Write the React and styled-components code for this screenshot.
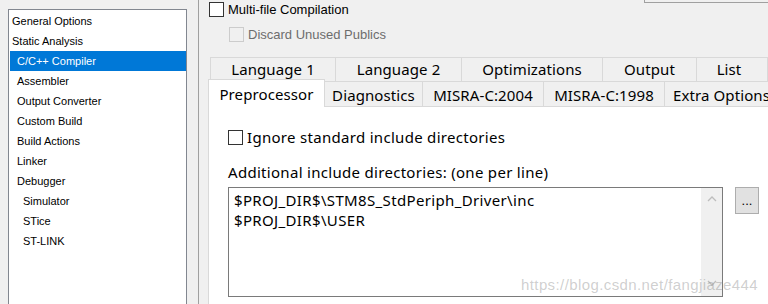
import React from "react";
import styled, { createGlobalStyle } from "styled-components";

const Global = createGlobalStyle`
  html, body { margin: 0; padding: 0; background: #f0f0f0; }
  body { width: 768px; height: 304px; overflow: hidden; }
`;

const Page = styled.div`
  position: relative;
  display: flex;
  width: 768px;
  height: 304px;
  overflow: hidden;
  background: #f0f0f0;
  color: #000;
  font-family: "Noto Sans", "Liberation Sans", sans-serif;
`;

const Sidebar = styled.div`
  flex: 0 0 199px;
  box-sizing: border-box;
  padding: 9px 0 0 8px;
  border-right: 1px solid #a0a0a0;
`;

const TreePanel = styled.div`
  box-sizing: border-box;
  width: 179px;
  height: 310px;
  padding-top: 1px;
  background: #fff;
  border: 1px solid #828790;
`;

const TreeItem = styled.div`
  height: 20px;
  line-height: 20px;
  margin-left: 1px;
  padding-left: ${(p) => [2, 7, 13][p.$level]}px;
  font-family: "Liberation Sans", Arial, sans-serif;
  font-size: 11px;
  white-space: nowrap;
  background: ${(p) => (p.$selected ? "#0078d7" : "transparent")};
  color: ${(p) => (p.$selected ? "#fff" : "#000")};
`;

const Main = styled.div`
  flex: 1;
  min-width: 0;
  display: flex;
  flex-direction: column;
  padding-left: 9px;
`;

const TopRow = styled.div`
  display: flex;
  align-items: flex-start;
  padding: 2px 0 0 1px;
`;

const Option = styled.label`
  display: flex;
  align-items: center;
  gap: 4px;
  white-space: nowrap;
  font-family: ${(p) => (p.$large ? '"Noto Sans", sans-serif' : '"Liberation Sans", Arial, sans-serif')};
  font-size: ${(p) => (p.$large ? 15 : 13)}px;
  letter-spacing: ${(p) => (p.$large ? "0.3px" : "normal")};
  line-height: ${(p) => (p.$large ? 21 : 15)}px;
  color: ${(p) => (p.$disabled ? "#6d6d6d" : "#000")};
  margin-left: ${(p) => p.$indent || 0}px;
  margin-top: ${(p) => p.$top || 0}px;
`;

const Box = styled.span`
  flex: 0 0 auto;
  box-sizing: border-box;
  width: 15px;
  height: 15px;
  border: 1px solid ${(p) => (p.$disabled ? "#cccccc" : "#333333")};
  background: ${(p) => (p.$disabled ? "transparent" : "#fff")};
`;

const CutBox = styled.div`
  margin-left: auto;
  margin-top: -2px;
  width: 124px;
  height: 3px;
  box-sizing: border-box;
  border-left: 1px solid #a0a0a0;
  border-bottom: 1px solid #a0a0a0;
`;

const TabRow = styled.div`
  display: flex;
  margin-left: ${(p) => p.$offset || 0}px;
  margin-top: ${(p) => p.$top || 0}px;
  height: ${(p) => p.$height}px;
  align-items: flex-start;
`;

const UpperTab = styled.div`
  box-sizing: border-box;
  flex: ${(p) => (p.$width ? `0 0 ${p.$width}px` : "1 0 auto")};
  height: 24px;
  padding-bottom: 1px;
  padding-right: ${(p) => p.$padRight || 0}px;
  display: flex;
  align-items: center;
  justify-content: center;
  border: 1px solid #d9d9d9;
  border-bottom: none;
  & + & { margin-left: -1px; }
  font-size: 15px;
  letter-spacing: 0.1px;
  white-space: nowrap;
`;

const LowerTab = styled.div`
  position: relative;
  box-sizing: border-box;
  flex: 0 0 ${(p) => p.$width}px;
  height: ${(p) => (p.$active ? 28 : 26)}px;
  margin-top: ${(p) => (p.$active ? -2 : 0)}px;
  padding-top: ${(p) => (p.$active ? 0 : 1)}px;
  display: flex;
  align-items: center;
  justify-content: center;
  border: 1px solid #d9d9d9;
  border-bottom: ${(p) => (p.$active ? "none" : "1px solid #d9d9d9")};
  background: ${(p) => (p.$active ? "#fff" : "#f0f0f0")};
  z-index: ${(p) => (p.$active ? 1 : 0)};
  & + & { margin-left: -1px; }
  font-size: 15px;
  letter-spacing: 0.1px;
  white-space: nowrap;
`;

const Panel = styled.div`
  flex: 1;
  box-sizing: border-box;
  display: flex;
  flex-direction: column;
  align-items: flex-start;
  padding: 20px 0 0 19px;
  background: #fff;
  border-left: 1px solid #d9d9d9;
`;

const FieldLabel = styled.div`
  margin-top: 14px;
  font-size: 15px;
  letter-spacing: 0.3px;
  line-height: 20px;
  white-space: nowrap;
`;

const EditorRow = styled.div`
  display: flex;
  align-items: flex-start;
  margin-top: 5px;
`;

const TextArea = styled.div`
  box-sizing: border-box;
  width: 495px;
  height: 110px;
  display: flex;
  background: #fff;
  border: 1px solid #7a7a7a;
`;

const Lines = styled.div`
  flex: 1;
  padding: 2px 5px;
  font-size: 15px;
  letter-spacing: 0.35px;
  line-height: 20px;
  white-space: pre;
`;

const ScrollBar = styled.div`
  flex: 0 0 21px;
  display: flex;
  flex-direction: column;
  justify-content: space-between;
  padding-bottom: 3px;
  background: #f0f0f0;
`;

const Arrow = styled.div`
  height: 21px;
  display: flex;
  align-items: center;
  justify-content: center;
`;

const BrowseButton = styled.div`
  box-sizing: border-box;
  margin-left: 12px;
  width: 24px;
  height: 27px;
  display: flex;
  align-items: center;
  justify-content: center;
  background: #e1e1e1;
  border: 1px solid #adadad;
  font-family: "Liberation Sans", Arial, sans-serif;
  font-size: 13px;
  line-height: 15px;
`;

const Watermark = styled.div`
  position: absolute;
  left: 521px;
  top: 276px;
  font-family: "Liberation Sans", Arial, sans-serif;
  font-size: 15px;
  line-height: 17px;
  letter-spacing: 0.4px;
  color: rgba(140, 140, 140, 0.42);
  pointer-events: none;
  white-space: nowrap;
`;

const Chevron = ({ down }) => (
  <svg width="10" height="6" viewBox="0 0 10 6">
    <polyline
      points={down ? "1,1 5,5 9,1" : "1,5 5,1 9,5"}
      fill="none"
      stroke="#bdbdbd"
      strokeWidth="1.3"
    />
  </svg>
);

const tree = [
  ["General Options", 0],
  ["Static Analysis", 0],
  ["C/C++ Compiler", 1, true],
  ["Assembler", 1],
  ["Output Converter", 1],
  ["Custom Build", 1],
  ["Build Actions", 1],
  ["Linker", 1],
  ["Debugger", 1],
  ["Simulator", 2],
  ["STice", 2],
  ["ST-LINK", 2],
];

const upperTabs = [
  ["Language 1", 126],
  ["Language 2", 127],
  ["Optimizations", 142],
  ["Output", 95],
  ["List", 0, 6],
];

const lowerTabs = [
  ["Preprocessor", 117, true],
  ["Diagnostics", 99],
  ["MISRA-C:2004", 122],
  ["MISRA-C:1998", 122],
  ["Extra Options", 115],
];

export default function App() {
  return (
    <>
      <Global />
      <Page>
        <Sidebar>
          <TreePanel>
            {tree.map(([name, level, sel]) => (
              <TreeItem key={name} $level={level} $selected={sel}>
                {name}
              </TreeItem>
            ))}
          </TreePanel>
        </Sidebar>
        <Main>
          <TopRow>
            <Option>
              <Box />
              Multi-file Compilation
            </Option>
            <CutBox />
          </TopRow>
          <Option $disabled $indent={21} $top={10}>
            <Box $disabled />
            Discard Unused Publics
          </Option>
          <TabRow $offset={2} $top={15} $height={24}>
            {upperTabs.map(([name, w, pr]) => (
              <UpperTab key={name} $width={w} $padRight={pr}>
                {name}
              </UpperTab>
            ))}
          </TabRow>
          <TabRow $height={26}>
            {lowerTabs.map(([name, w, active]) => (
              <LowerTab key={name} $width={w} $active={active}>
                {name}
              </LowerTab>
            ))}
          </TabRow>
          <Panel>
            <Option $large>
              <Box />
              Ignore standard include directories
            </Option>
            <FieldLabel>Additional include directories: (one per line)</FieldLabel>
            <EditorRow>
              <TextArea>
                <Lines>
                  {"$PROJ_DIR$\\STM8S_StdPeriph_Driver\\inc\n$PROJ_DIR$\\USER"}
                </Lines>
                <ScrollBar>
                  <Arrow>
                    <Chevron />
                  </Arrow>
                  <Arrow>
                    <Chevron down />
                  </Arrow>
                </ScrollBar>
              </TextArea>
              <BrowseButton>...</BrowseButton>
            </EditorRow>
          </Panel>
        </Main>
        <Watermark>https://blog.csdn.net/fangjiaze444</Watermark>
      </Page>
    </>
  );
}
